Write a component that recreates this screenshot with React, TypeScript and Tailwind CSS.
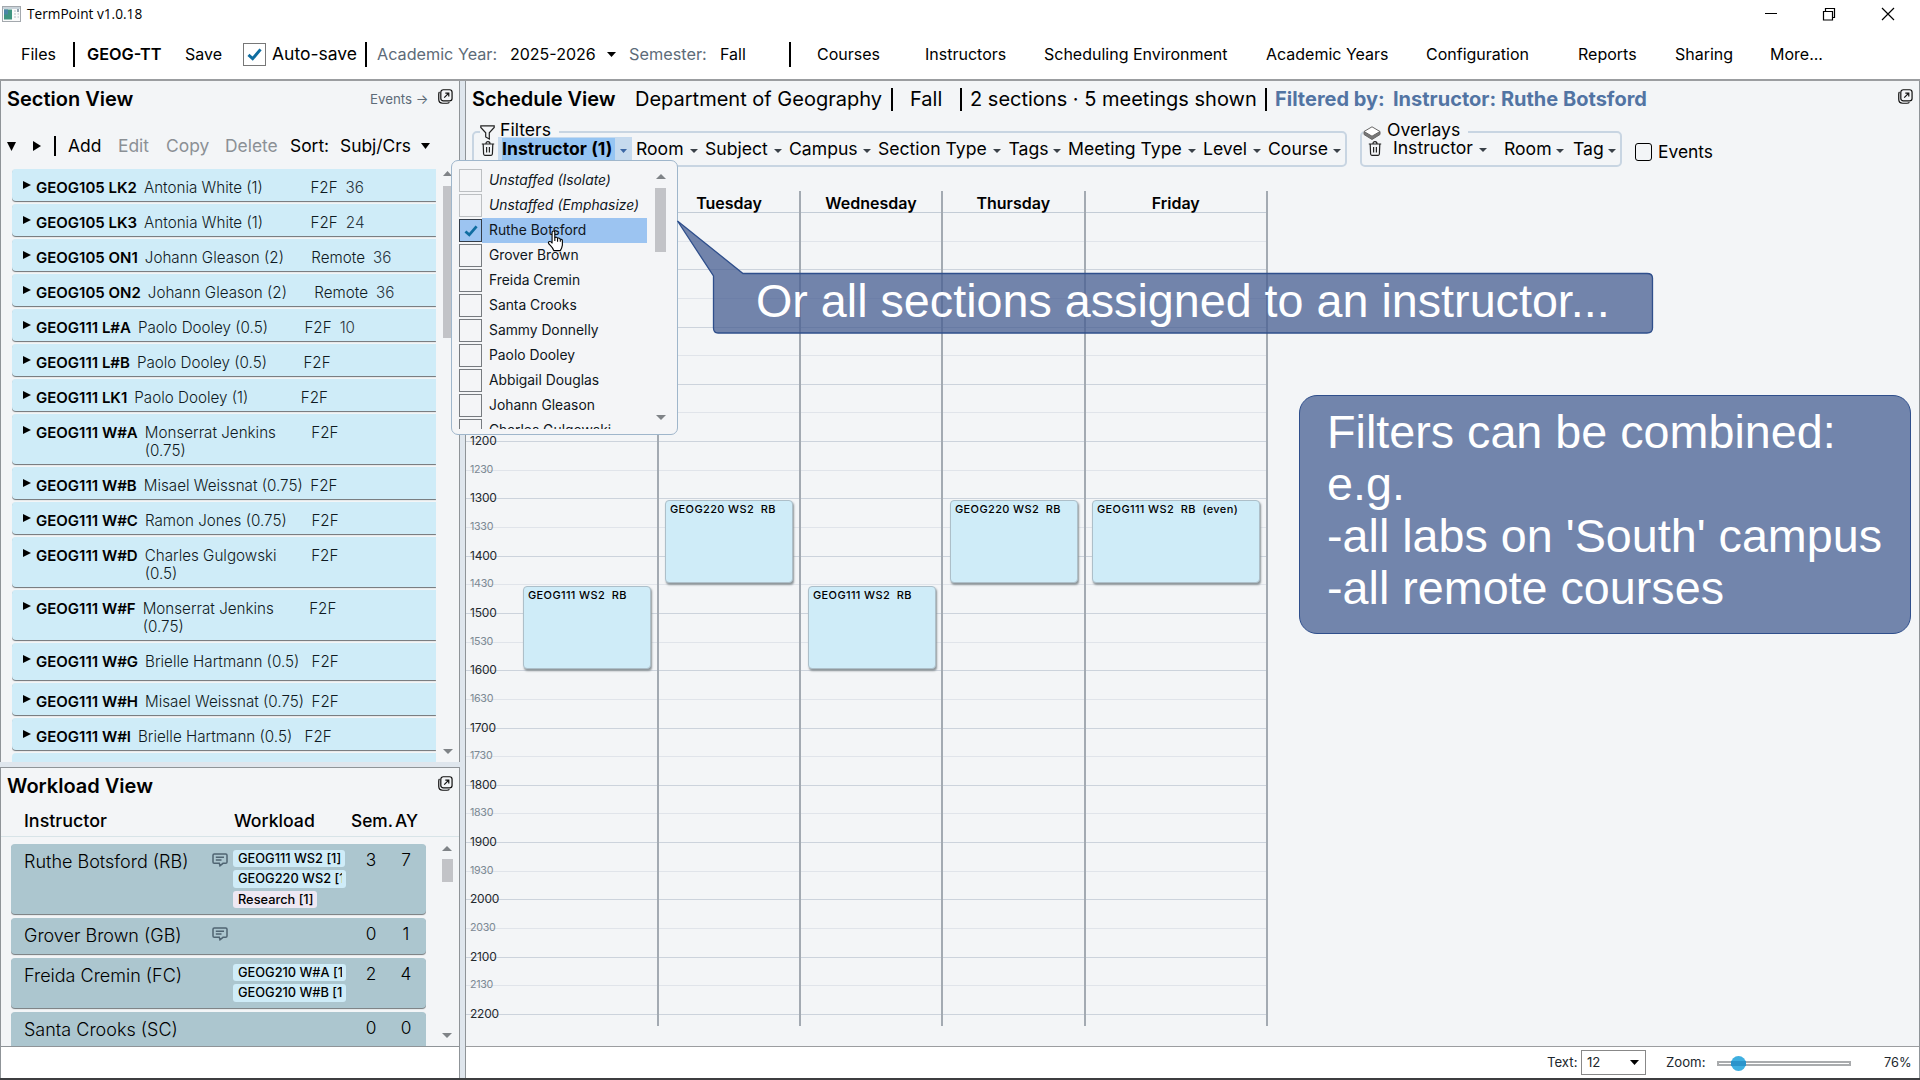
import React from "react";

const Caret = ({ className = "" }: { className?: string }) => (
  <svg viewBox="0 0 10 6" preserveAspectRatio="none" className={"shrink-0 " + className} fill="currentColor">
    <path d="M0 0H10L5 6Z" />
  </svg>
);

const RightTri = ({ className = "" }: { className?: string }) => (
  <svg viewBox="0 0 8 8" preserveAspectRatio="none" className={"shrink-0 " + className} fill="currentColor">
    <path d="M0 0L8 4L0 8Z" />
  </svg>
);

const Check = ({ className = "" }: { className?: string }) => (
  <svg viewBox="0 0 16 14" className={className} fill="none" stroke="#0f6da0" strokeWidth="3.2">
    <path d="M1.5 7.5L6 11.5L14.5 1.5" />
  </svg>
);

const PopOut = () => (
  <svg viewBox="0 0 16 16" className="h-[15px] w-[15px] shrink-0" fill="none" stroke="#111" strokeWidth="1.3">
    <rect x="3" y="0.8" width="12" height="11.8" rx="2.6" />
    <path d="M1.6 3.2C.9 3.8.8 4.6.8 5.6V11c0 2.600 1.600 4.200 4.200 4.200h4.500c1.300 0 2-.2 2.700-1" />
    <path d="M6.600 9.200L11.200 4.600M7.800 4.300H11.500V8" />
  </svg>
);

const Trash = () => (
  <svg viewBox="0 0 14 15" className="h-[15px] w-[14px] shrink-0" fill="none" stroke="#222" strokeWidth="1.200">
    <path d="M.8 3H13.200M5 2.800C5 1.300 5.800.7 7 .7S9 1.300 9 2.800M2.200 3L2.600 13C2.700 13.800 3.100 14.300 3.800 14.300H10.200C10.900 14.300 11.300 13.800 11.400 13L11.800 3M5.600 6V11.500M8.400 6V11.500" />
  </svg>
);

const Comment = () => (
  <svg viewBox="0 0 16 14" className="h-[14px] w-4" fill="none" stroke="#4f6472" strokeWidth="1.500">
    <path d="M2.300.9H13.700Q15 .9 15 2.200V9Q15 10.300 13.700 10.300H11L8 12.800L7.300 10.300H2.300Q1 10.300 1 9V2.200Q1 .9 2.300.9Z" />
    <path d="M3.800 4.200H12M3.800 7H9.500" />
  </svg>
);

const Bar = ({ h = "h-[25px]" }: { h?: string }) => <div className={"w-[2px] shrink-0 bg-black " + h} />;

type Piece = { t: string; w: number; c?: string };
const Pieces = ({ items }: { items: Piece[] }) => (
  <>
    {items.map((p, i) => (
      <div key={i} className={"shrink-0 whitespace-pre " + (p.c ?? "")} style={{ width: p.w }}>
        {p.t}
      </div>
    ))}
  </>
);

const menus: Piece[] = [
  { t: "Courses", w: 108 },
  { t: "Instructors", w: 119 },
  { t: "Scheduling Environment", w: 222 },
  { t: "Academic Years", w: 160 },
  { t: "Configuration", w: 152 },
  { t: "Reports", w: 97 },
  { t: "Sharing", w: 95 },
  { t: "More...", w: 60 },
];

const sections: [string, string, string, string, number][] = [
  ["GEOG105 LK2", "Antonia White (1)", "F2F", "36", 35],
  ["GEOG105 LK3", "Antonia White (1)", "F2F", "24", 35],
  ["GEOG105 ON1", "Johann Gleason (2)", "Remote", "36", 35],
  ["GEOG105 ON2", "Johann Gleason (2)", "Remote", "36", 35],
  ["GEOG111 L#A", "Paolo Dooley (0.5)", "F2F", "10", 35],
  ["GEOG111 L#B", "Paolo Dooley (0.5)", "F2F", "", 35],
  ["GEOG111 LK1", "Paolo Dooley (1)", "F2F", "", 35],
  ["GEOG111 W#A", "Monserrat Jenkins\n(0.75)", "F2F", "", 53],
  ["GEOG111 W#B", "Misael Weissnat (0.75)", "F2F", "", 35],
  ["GEOG111 W#C", "Ramon Jones (0.75)", "F2F", "", 35],
  ["GEOG111 W#D", "Charles Gulgowski\n(0.5)", "F2F", "", 53],
  ["GEOG111 W#F", "Monserrat Jenkins\n(0.75)", "F2F", "", 53],
  ["GEOG111 W#G", "Brielle Hartmann (0.5)", "F2F", "", 40],
  ["GEOG111 W#H", "Misael Weissnat (0.75)", "F2F", "", 35],
  ["GEOG111 W#I", "Brielle Hartmann (0.5)", "F2F", "", 35],
];

const workload: { n: string; note?: boolean; chips: string[]; s: string; y: string; h: number }[] = [
  { n: "Ruthe Botsford (RB)", note: true, chips: ["GEOG111 WS2 [1]", "GEOG220 WS2 [1]", "Research [1]"], s: "3", y: "7", h: 70 },
  { n: "Grover Brown (GB)", note: true, chips: [], s: "0", y: "1", h: 36 },
  { n: "Freida Cremin (FC)", chips: ["GEOG210 W#A [1]", "GEOG210 W#B [1]"], s: "2", y: "4", h: 50 },
  { n: "Santa Crooks (SC)", chips: [], s: "0", y: "0", h: 50 },
];

const filters: { t: string; w: number }[] = [
  { t: "Room", w: 69 },
  { t: "Subject", w: 84 },
  { t: "Campus", w: 89 },
  { t: "Section Type", w: 130.500 },
  { t: "Tags", w: 59.500 },
  { t: "Meeting Type", w: 135 },
  { t: "Level", w: 65 },
  { t: "Course", w: 80 },
];

const people = [
  "Unstaffed (Isolate)",
  "Unstaffed (Emphasize)",
  "Ruthe Botsford",
  "Grover Brown",
  "Freida Cremin",
  "Santa Crooks",
  "Sammy Donnelly",
  "Paolo Dooley",
  "Abbigail Douglas",
  "Johann Gleason",
  "Charles Gulgowski",
];

const FIRST_LABELLED = 8;
const halfHours = Array.from({ length: 29 }, (_, i) => {
  const h = String(8 + Math.floor(i / 2)).padStart(2, "0");
  return h + (i % 2 ? "30" : "00");
});

const dayColumns: { d: string; w: number }[] = [
  { d: "", w: 144 },
  { d: "Tuesday", w: 142 },
  { d: "Wednesday", w: 142 },
  { d: "Thursday", w: 142.500 },
  { d: "Friday", w: 182.500 },
];

const meetings: { x: number; y: number; w: number; t: string }[] = [
  { x: 523, y: 586, w: 128, t: "GEOG111 WS2  RB" },
  { x: 665, y: 500, w: 128, t: "GEOG220 WS2  RB" },
  { x: 808, y: 586, w: 128, t: "GEOG111 WS2  RB" },
  { x: 950, y: 500, w: 128, t: "GEOG220 WS2  RB" },
  { x: 1092, y: 500, w: 168, t: "GEOG111 WS2  RB  (even)" },
];

function TitleBar() {
  return (
    <div className="flex h-[28px] items-center pl-[2px]">
      <svg viewBox="0 0 19 16" className="h-4 w-[19px]">
        <rect x=".5" y=".5" width="18" height="15" fill="#fafafa" stroke="#a3a8ad" />
        <rect x="1" y="1" width="17" height="2" fill="#c9d3da" />
        <rect x="2" y="3.500" width="8" height="10" fill="#3f9480" />
        <rect x="2" y="3.500" width="4" height="5" fill="#4b86a6" />
        <path d="M12 5H14M12 8H14M12 11H14M15.500 8H17M15.500 11H17" stroke="#ccd2d6" strokeWidth="1.500" />
        <path d="M16 3V6" stroke="#2c4a66" />
      </svg>
      <div className="ml-[6px] w-[1738px] font-['Open_Sans'] text-[13.650px] text-black">TermPoint v1.0.18</div>
      <svg viewBox="0 0 130 14" className="h-[14px] w-[130px]" fill="none" stroke="#000" strokeWidth="1.200">
        <path d="M0 6.500H12M117 1L129 13M129 1L117 13" />
        <path d="M58.500 4.500H67.500V13H58.500ZM60.500 4.500V1.500H69.500V10.500H67.500" />
      </svg>
    </div>
  );
}

function MenuBar() {
  return (
    <div className="flex h-[51px] items-center pt-px pl-[21px] text-[16px] font-[380]">
      <Pieces items={[{ t: "Files", w: 52 }]} />
      <Bar />
      <Pieces
        items={[
          { t: "GEOG-TT", w: 97, c: "pl-3 text-[16.300px] font-semibold" },
          { t: "Save", w: 71, c: "pl-[13px]" },
        ]}
      />
      <div className="flex h-[23px] w-[23px] shrink-0 items-center justify-center border border-[#777]">
        <Check className="h-[13px] w-[15px]" />
      </div>
      <Pieces items={[{ t: "Auto-save", w: 99, c: "pl-[6px] text-[17.500px]" }]} />
      <Bar />
      <Pieces
        items={[
          { t: "Academic Year:", w: 143, c: "pl-[10px] text-[16.200px] text-[#5d6b78]" },
          { t: "2025-2026", w: 97 },
        ]}
      />
      <Caret className="h-[5px] w-[9px]" />
      <Pieces
        items={[
          { t: "Semester:", w: 104, c: "pl-[13px] text-[16.300px] text-[#5d6b78]" },
          { t: "Fall", w: 69 },
        ]}
      />
      <Bar />
      <div className="w-[26px] shrink-0" />
      <Pieces items={menus} />
    </div>
  );
}

function SectionView() {
  return (
    <section className="flex h-[681px] flex-col overflow-hidden border-x border-[#8f9498] bg-[#f3f5f7]">
      <div className="flex h-[36px] items-center pl-[6px] pr-[5px]">
        <div className="w-[363px] text-[20px] font-semibold">Section View</div>
        <div className="w-[68px] pt-[2px] text-[13.300px] text-[#5d6b78]">Events →</div>
        <div className="-mt-[5px]"><PopOut /></div>
      </div>
      <div className="flex h-[52px] items-center pt-[6px] pl-[6px] text-[17.400px] font-[380]">
        <Caret className="h-[9px] w-[9px]" />
        <RightTri className="ml-[17px] h-[10px] w-[8px]" />
        <div className="w-[13px]" />
        <Bar h="h-5" />
        <Pieces
          items={[
            { t: "Add", w: 62, c: "pl-[12px]" },
            { t: "Edit", w: 48, c: "text-[#8b9095]" },
            { t: "Copy", w: 59, c: "text-[#8b9095]" },
            { t: "Delete", w: 65, c: "text-[#8b9095]" },
            { t: "Sort:", w: 50 },
            { t: "Subj/Crs", w: 81 },
          ]}
        />
        <Caret className="h-[6px] w-[9px]" />
      </div>
      <div className="flex min-h-0 flex-1">
        <div className="ml-[11px] w-[424px] overflow-hidden text-[15px] leading-[18px]">
          {sections.map(([code, name, mode, n, h]) => (
            <div key={code} style={{ height: h }}>
              <div
                className="flex rounded-l-[4px] bg-[#cfecf8] pt-[10px] pl-[11px] shadow-[0_1px_1px_0_#6d7275]"
                style={{ height: h - 3 }}
              >
                <RightTri className="mt-[2px] h-[8px] w-[8px]" />
                <span className="ml-[5px] font-semibold whitespace-pre">{code}</span>
                <span className="ml-[7px] w-[166.500px] shrink-0 text-[15.200px] font-[350] whitespace-pre text-[#0f1a22]">{name}</span>
                <span className="font-[350] text-[15.200px] text-[#0f1a22]">{mode}</span>
                <span className="ml-[8px] text-[15.200px] font-[350] text-[#2b3640]">{n}</span>
              </div>
            </div>
          ))}
          <div className="h-[20px] rounded-tl-[4px] bg-[#cfecf8]" />
        </div>
        <div className="ml-[6px] flex w-[11px] flex-col items-center pt-[2px] pb-2 text-[#7f8387]">
          <Caret className="h-[5px] w-[9px] rotate-180" />
          <div className="mt-[10px] h-[152px] w-[10px] bg-[#c2c3c7]" />
          <Caret className="mt-auto h-[5px] w-[10px]" />
        </div>
      </div>
    </section>
  );
}

function WorkloadView() {
  return (
    <section className="flex h-[280px] flex-col border border-[#8f9498] bg-[#f3f5f7]">
      <div className="flex h-[36px] shrink-0 items-center justify-between pl-[6px] pr-[6px]">
        <div className="-mt-px text-[20px] font-semibold">Workload View</div>
        <div className="-mt-[5px]"><PopOut /></div>
      </div>
      <div className="flex h-[33px] shrink-0 items-center border-b border-[#d8e4e8] pt-[2px] pl-[23px] text-[17.300px]">
        <Pieces
          items={[
            { t: "Instructor", w: 210, c: "font-medium text-[17.900px]" },
            { t: "Workload", w: 117, c: "font-medium text-[17.700px]" },
            { t: "Sem.", w: 44, c: "font-medium" },
            { t: "AY", w: 30, c: "font-medium" },
          ]}
        />
      </div>
      <div className="flex min-h-0 flex-1 pt-[7px]">
        <div className="ml-[10px] flex w-[415px] flex-col gap-1 overflow-hidden text-[17.300px]">
          {workload.map((r) => (
            <div
              key={r.n}
              className="flex shrink-0 rounded-[4px] bg-[#acc6cf] pl-[13px] shadow-[0_1px_1px_0_#74797c]"
              style={{ height: r.h }}
            >
              <div className="w-[188px] pt-[7px] text-[18px] leading-[21px] font-[350]">{r.n}</div>
              <div className="w-[21px] pt-[9px]">{r.note && <Comment />}</div>
              <div className="flex w-[113px] flex-col items-start gap-[3px] pt-[6px]">
                {r.chips.map((c) => (
                  <div
                    key={c}
                    className={
                      "h-[17.300px] max-w-[113px] rounded-[3px] pr-[4px] pl-[5px] text-[12.800px] leading-[17px] font-medium " +
                      (c.startsWith("R") ? "bg-[#eee8f3]" : "bg-[#cfecf8]")
                    }
                  >
                    <div className="overflow-hidden whitespace-nowrap">{c}</div>
                  </div>
                ))}
              </div>
              <div className="w-[50px] pt-[5px] text-center leading-[21px] font-[350]">{r.s}</div>
              <div className="w-[20px] pt-[5px] text-center leading-[21px] font-[350]">{r.y}</div>
            </div>
          ))}
        </div>
        <div className="ml-[15px] flex w-[12px] flex-col items-center pt-[2px] pb-[8px] text-[#7f8387]">
          <Caret className="h-[5px] w-[10px] rotate-180" />
          <div className="mt-[8px] h-[23px] w-[11px] bg-[#c2c3c7]" />
          <Caret className="mt-auto h-[5px] w-[10px]" />
        </div>
      </div>
    </section>
  );
}

function ScheduleHeader() {
  return (
    <div className="flex h-[36px] items-center pl-[6px] text-[20px]">
      <Pieces
        items={[
          { t: "Schedule View", w: 163, c: "font-semibold" },
          { t: "Department of Geography", w: 256, c: "font-[380]" },
        ]}
      />
      <Bar h="h-[23px]" />
      <Pieces items={[{ t: "Fall", w: 67, c: "pl-[17px] font-[380]" }]} />
      <Bar h="h-[23px]" />
      <Pieces items={[{ t: "2 sections · 5 meetings shown", w: 303, c: "pl-2 font-[380]" }]} />
      <Bar h="h-[23px]" />
      <Pieces
        items={[
          { t: "Filtered by:", w: 126, c: "pl-2 font-bold text-[#5274a3]" },
          { t: "Instructor: Ruthe Botsford", w: 505, c: "font-bold text-[#5274a3]" },
        ]}
      />
      <div className="-mt-[5px]"><PopOut /></div>
    </div>
  );
}

function FilterBars() {
  return (
    <div className="flex h-[50px] pl-[6px] pt-[4px] text-[17.600px] leading-[21px] font-[380]">
      <fieldset className="h-[46px] w-[875px] min-w-0 shrink-0 rounded-[5px] border-2 border-[#c8d5e2] pl-[7px]">
        <legend className="-ml-px flex h-[21px] items-center pr-2">
          <svg viewBox="0 0 15 15" className="mt-[2px] h-[15px] w-[15px]" fill="none" stroke="#222" strokeWidth="1.200">
            <path d="M.8 .8H14.200V2.500L9.300 7.800V14L5.700 12V7.800L.8 2.500Z" />
          </svg>
          <span className="-mt-[5px] ml-[5px]">Filters</span>
        </legend>
        <div className="-mt-[5px] flex h-[23px] items-center">
          <Trash />
          <div className="ml-[3px] flex h-[23px] w-[134px] shrink-0 items-center bg-[#c6daee] pl-[4px]">
            <div className="h-[22px] w-[113px] shrink-0 bg-[#96c5f3] text-[17.500px] font-bold tracking-[0.050px] whitespace-nowrap">Instructor (1)</div>
            <Caret className="mt-[5px] ml-[5px] h-[4px] w-[7px] text-[#3c67a5]" />
          </div>
          <div className="w-1 shrink-0" />
          {filters.map((f) => (
            <div key={f.t} className="flex shrink-0 items-center justify-between whitespace-nowrap" style={{ width: f.w }}>
              {f.t}
              <Caret className="mt-[5px] mr-[7.500px] h-[4px] w-[8px] text-[#3a4148]" />
            </div>
          ))}
        </div>
      </fieldset>
      <fieldset className="ml-[13px] h-[46px] w-[262px] min-w-0 shrink-0 rounded-[5px] border-2 border-[#c8d5e2] pl-[6px]">
        <legend className="-ml-[5px] flex h-[21px] items-center pr-2">
          <svg viewBox="0 0 18 14" className="mt-[2px] h-[14px] w-[18px]" stroke="#666" strokeLinejoin="round">
            <path d="M1 5.500V8.500L9 13.500L17 8.500V5.500" fill="#777" />
            <path d="M1 5.500L9 .8L17 5.500L9 10.200Z" fill="#fff" />
          </svg>
          <span className="-mt-[5px] ml-[6px]">Overlays</span>
        </legend>
        <div className="-mt-[5px] flex h-[23px] items-center">
          <Trash />
          {[
            { t: "Instructor", w: 98, g: 11, c: "-mt-[2px]" },
            { t: "Room", w: 64, g: 13, c: "" },
            { t: "Tag", w: 47, g: 5, c: "" },
          ].map((f) => (
            <div
              key={f.t}
              className={"flex shrink-0 items-center justify-between whitespace-nowrap " + f.c}
              style={{ width: f.w, marginLeft: f.g }}
            >
              {f.t}
              <Caret className="mt-[5px] mr-[4px] h-[4px] w-[8px] text-[#3a4148]" />
            </div>
          ))}
        </div>
      </fieldset>
      <div className="ml-[13px] flex items-center gap-[6px] pt-[15px]">
        <div className="mt-px h-[18px] w-[17px] rounded-[3px] border border-black" />
        <span className="text-[17.400px]">Events</span>
      </div>
    </div>
  );
}

function Calendar() {
  return (
    <div className="relative mt-[24px] h-[835px] w-[802px]">
      <div className="flex h-[21px] pl-[48px] text-[16px] leading-[24px] font-semibold">
        {dayColumns.map((c, i) => (
          <div key={i} className="text-center" style={{ width: c.w }}>
            {c.d}
          </div>
        ))}
      </div>
      <div className="border-t border-[#c3ccd6]">
        {halfHours.map((t, i) => (
          <div
            key={t}
            className={
              "relative h-[28.650px] " + (i === 28 ? "" : i % 2 ? "border-b border-[#ccd3dc]" : "border-b border-[#e0e4ea]")
            }
          >
            {i >= FIRST_LABELLED && (
              <span
                className={
                  "absolute -top-[9px] left-[4px] leading-[16px] " +
                  (i % 2 ? "text-[10.700px] tracking-[-0.300px] text-[#7c8994]" : "text-[12px] tracking-[-0.200px] text-[#23292e]")
                }
              >
                {t}
              </span>
            )}
          </div>
        ))}
      </div>
      <div className="absolute top-0 left-[49px] flex h-full">
        {dayColumns.map((c, i) => (
          <div key={i} className="border-r-2 border-[#a3aab2]" style={{ width: c.w }} />
        ))}
      </div>
      {meetings.map((m, i) => (
        <div
          key={i}
          className="absolute h-[83px] rounded-[4px] border border-[#adbfc9] bg-[#cfecf8] pt-px pl-[4px] text-[11px] leading-[14px] font-medium tracking-[0.370px] whitespace-pre shadow-[1px_2px_2px_0_#8d9599]"
          style={{ left: m.x - 466, top: m.y - 191, width: m.w }}
        >
          {m.t}
        </div>
      ))}
    </div>
  );
}

function InstructorMenu() {
  return (
    <div className="absolute top-[160px] left-[451px] flex h-[275px] w-[227px] rounded-[7px] border border-[#9fb6cb] bg-[#f4f5f7] pt-[7px] pb-[5px] pl-[7px] text-[13.850px]">
      <div className="h-[261px] w-[188px] overflow-hidden">
        {people.map((p, i) => (
          <div key={p} className="flex h-[25px] items-center">
            <div
              className={
                "flex h-[23px] w-[23px] shrink-0 items-center justify-center border " +
                (i < 2 ? "border-[#bcbfc2]" : i === 2 ? "border-[#333c48] bg-[#9cc4f1]" : "border-[#777b80]")
              }
            >
              {i === 2 && <Check className="h-[12px] w-[14px]" />}
            </div>
            <div
              className={
                "flex h-full flex-1 items-center pl-[7px] text-[#0f161c] font-[380] " +
                (i < 2 ? "text-[13.850px] italic" : i === 2 ? "bg-[#9cc4f1]" : "")
              }
            >
              {p}
            </div>
          </div>
        ))}
      </div>
      <div className="ml-[8px] flex w-[11px] flex-col items-center pt-[6px] pb-[9px] text-[#7f8387]">
        <Caret className="h-[5px] w-[10px] rotate-180" />
        <div className="mt-[9px] h-[64px] w-[11px] bg-[#c2c3c7]" />
        <Caret className="mt-auto h-[5px] w-[10px]" />
      </div>
    </div>
  );
}

function Callouts() {
  return (
    <>
      <svg viewBox="0 0 980 118" className="absolute top-[218px] left-[675px] h-[118px] w-[980px]" fill="rgba(71,94,146,0.75)" stroke="#2f4f8c" strokeWidth="1.300">
        <path d="M2.500 3L68 55.500H972Q977.500 55.500 977.500 60V110Q977.500 115 972 115H43Q38.500 115 38.500 110V58Z" />
      </svg>
      <div className="absolute top-[274px] left-[756px] font-['Liberation_Sans'] text-[46.700px] leading-[54px] whitespace-nowrap text-white">
        Or all sections assigned to an instructor...
      </div>
      <div className="absolute top-[395px] left-[1299px] h-[239px] w-[612px] rounded-[18px] border border-[#2f4f8c] bg-[#7285ac] pt-[10px] pl-[27px] font-['Liberation_Sans'] text-[46.700px] leading-[52px] whitespace-pre text-white">
        {"Filters can be combined:\ne.g.\n-all labs on 'South' campus\n-all remote courses"}
      </div>
      <svg viewBox="0 0 24 32" className="absolute top-[230px] left-[547px] h-[22px] w-[17px]" fill="#fff" stroke="#000" strokeWidth="1.600" strokeLinejoin="round">
        <path d="M7 17V3.500Q7 1.500 9 1.500T11 3.500V11Q14 9.500 15 12Q18 11 19 13.500Q22 13 22 16V22Q21.500 26 19 30H9.500Q8 26 4.500 22.500Q0 18 2.500 17Q5 16 7 19Z" />
        <path d="M11 11V16M15 12V17M19 13.500V17" fill="none" />
      </svg>
    </>
  );
}

function StatusBar() {
  return (
    <div className="flex h-[31px] items-center bg-white pl-[1081px] text-[13.200px] text-[#20272d]">
      <Pieces items={[{ t: "Text:", w: 34 }]} />
      <div className="flex h-[25px] w-[65px] shrink-0 items-center border border-[#888] pr-[6px] pl-[5px]">
        <span className="flex-1">12</span>
        <Caret className="h-[5px] w-[9px] text-black" />
      </div>
      <Pieces items={[{ t: "Zoom:", w: 71, c: "pl-5" }]} />
      <div className="relative mt-[2px] h-[5px] w-[134px] shrink-0 border-2 border-[#a9abad] bg-white">
        <div className="absolute -top-[7px] left-[12px] h-[15px] w-[15px] rounded-full bg-[#3fafe0]">
          <div className="flex h-full items-center">
            <div className="h-[5px] w-full bg-[#2b94cb]" />
          </div>
        </div>
      </div>
      <Pieces items={[{ t: "76%", w: 40, c: "ml-[33px] text-[12.800px]" }]} />
    </div>
  );
}

export default function App() {
  return (
    <div className="relative flex h-[1080px] w-[1920px] flex-col overflow-hidden bg-white font-['Inter',sans-serif] text-black">
      <TitleBar />
      <MenuBar />
      <div className="h-[2px] shrink-0 bg-[#9b9da0]" />
      <div className="flex h-[997px] shrink-0 bg-[#dfe6ed]">
        <div className="w-[460px]">
          <SectionView />
          <div className="h-[5px]" />
          <WorkloadView />
          <div className="h-[31px] border-x border-[#8f9498] bg-white" />
        </div>
        <main className="ml-[5px] w-[1455px] border-x border-[#8f9498] bg-[#f3f5f7]">
          <ScheduleHeader />
          <FilterBars />
          <Calendar />
          <div className="mt-[20px] h-px bg-[#9b9da0]" />
          <StatusBar />
        </main>
      </div>
      <div className="h-[2px] shrink-0 bg-[#3d3e40]" />
      <InstructorMenu />
      <Callouts />
    </div>
  );
}
